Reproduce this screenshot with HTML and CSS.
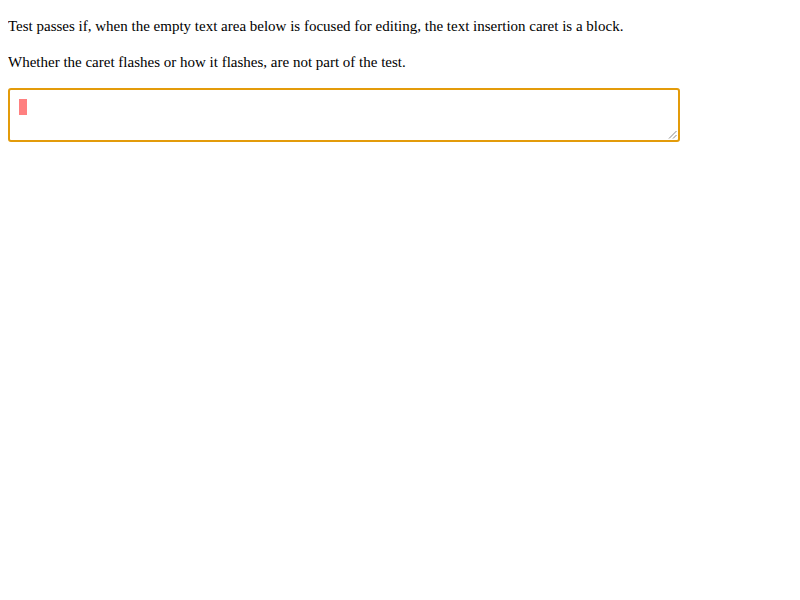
FILE: index.html
```html
<!DOCTYPE html>
<html>
<head>
<meta charset="utf-8">
<link rel="stylesheet" href="styles.css">
</head>
<body>
<p class="line">Test passes if, when the empty text area below is focused for editing, the text insertion caret is a block.</p>
<p class="line">Whether the caret flashes or how it flashes, are not part of the test.</p>
<div class="area">
  <span class="caret"></span>
  <svg class="grip" width="9" height="9" viewBox="0 0 9 9">
    <line x1="8.5" y1="1" x2="1" y2="8.5" stroke="#888" stroke-width="1"/>
    <line x1="8.5" y1="5" x2="5" y2="8.5" stroke="#888" stroke-width="1"/>
  </svg>
</div>
</body>
</html>
```
FILE: styles.css
```css
body {
  margin: 8px;
  font-family: "Liberation Serif", "Times New Roman", serif;
  font-size: 15px;
  color: #000;
  background: #fff;
}
.line {
  margin: 16px 0;
  line-height: 20px;
}
.line:first-child {
  margin-top: 8px;
}
.area {
  position: relative;
  box-sizing: border-box;
  width: 672px;
  height: 54px;
  border: 2px solid #e39b0a;
  border-radius: 3px;
  padding: 9px 9px;
}
.caret {
  display: block;
  width: 8px;
  height: 16px;
  background: #ff8080;
}
.grip {
  position: absolute;
  right: 1px;
  bottom: 1px;
}
```
